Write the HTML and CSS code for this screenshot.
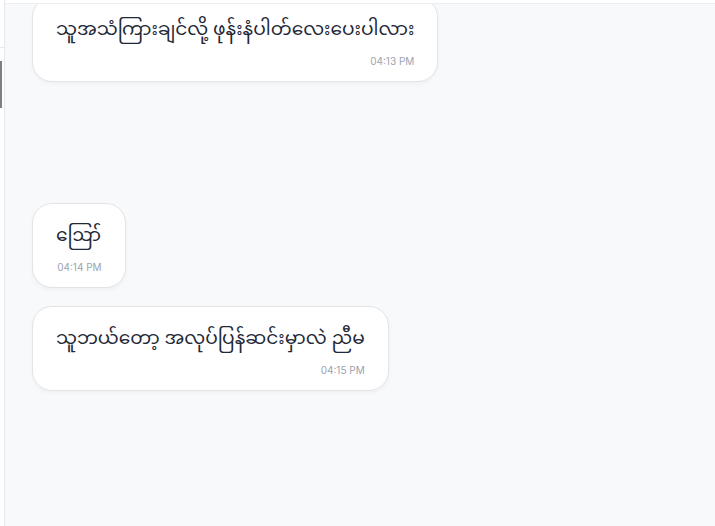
FILE: index.html
```html
<!DOCTYPE html>
<html lang="my">
<head>
<meta charset="utf-8">
<title>Chat</title>
<link rel="stylesheet" href="styles.css">
</head>
<body>
<div class="app">
  <aside class="sidebar">
    <div class="side-top"></div>
    <div class="side-bar"></div>
  </aside>
  <main class="main">
    <div class="header"></div>
    <div class="messages">
      <div class="bubble first">
        <div class="text">သူအသံကြားချင်လို့ ဖုန်းနံပါတ်လေးပေးပါလား</div>
        <div class="time">04:13 PM</div>
      </div>
      <div class="bubble gap-big">
        <div class="text">ဪ</div>
        <div class="time">04:14 PM</div>
      </div>
      <div class="bubble">
        <div class="text">သူဘယ်တော့ အလုပ်ပြန်ဆင်းမှာလဲ ညီမ</div>
        <div class="time">04:15 PM</div>
      </div>
    </div>
  </main>
</div>
</body>
</html>
```
FILE: styles.css
```css
* { box-sizing: border-box; }
html, body { margin: 0; padding: 0; }
body {
  font-family: "Noto Sans", "Noto Sans Myanmar", sans-serif;
  background: #f8f9fb;
}
.app {
  display: flex;
  height: 526px;
  overflow: hidden;
}
.sidebar {
  width: 5px;
  flex: none;
  background: #ffffff;
  border-right: 1px solid #e6e8eb;
  display: flex;
  flex-direction: column;
}
.side-top {
  height: 48px;
  border-bottom: 1px solid #e6e8eb;
}
.side-bar {
  margin-top: 13px;
  width: 2px;
  height: 47px;
  background: #7b7f86;
}
.main {
  flex: 1;
  display: flex;
  flex-direction: column;
  min-width: 0;
}
.header {
  height: 4px;
  flex: none;
  background: #ffffff;
  border-bottom: 1px solid #eceef1;
  position: relative;
  z-index: 1;
}
.messages {
  flex: 1;
  background: #f8f9fb;
  padding-left: 27px;
  display: flex;
  flex-direction: column;
  align-items: flex-start;
  overflow: hidden;
}
.bubble {
  background: #ffffff;
  border: 1px solid #e2e4e8;
  border-radius: 20px;
  padding: 14px 23px 13px;
  box-shadow: 0 2px 4px rgba(0, 0, 0, 0.04);
  margin-bottom: 18px;
}
.bubble.first { margin-top: -7px; }
.bubble.gap-big { margin-top: 103px; }
.text {
  font-size: 18.6px;
  line-height: 31px;
  color: #1f2937;
}
.time {
  font-family: "Inter", "Liberation Sans", sans-serif;
  font-size: 10px;
  line-height: 14px;
  color: #9ca3af;
  text-align: right;
  margin-top: 11px;
}
```
